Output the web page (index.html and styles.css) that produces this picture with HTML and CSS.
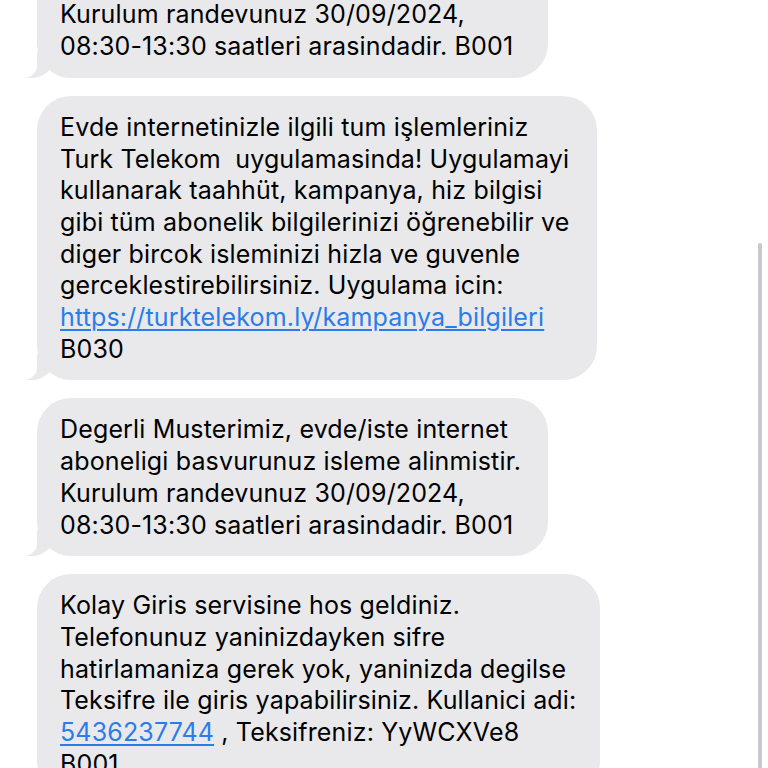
FILE: index.html
```html
<!DOCTYPE html>
<html lang="tr">
<head>
<meta charset="utf-8">
<title>Mesajlar</title>
<link rel="stylesheet" href="styles.css">
</head>
<body>
<main class="thread">
  <div class="bubble bubble-narrow">
    Degerli Musterimiz, evde/iste internet<br>
    aboneligi basvurunuz isleme alinmistir.<br>
    Kurulum randevunuz 30/09/2024,<br>
    08:30-13:30 saatleri arasindadir. B001
  </div>
  <div class="bubble bubble-wide">
    Evde internetinizle ilgili tum işlemleriniz<br>
    Turk Telekom&nbsp; uygulamasinda! Uygulamayi<br>
    kullanarak taahhüt, kampanya, hiz bilgisi<br>
    gibi tüm abonelik bilgilerinizi öğrenebilir ve<br>
    diger bircok isleminizi hizla ve guvenle<br>
    gerceklestirebilirsiniz. Uygulama icin:<br>
    <a class="link" href="#">https://turktelekom.ly/kampanya_bilgileri</a><br>
    B030
  </div>
  <div class="bubble bubble-narrow">
    Degerli Musterimiz, evde/iste internet<br>
    aboneligi basvurunuz isleme alinmistir.<br>
    Kurulum randevunuz 30/09/2024,<br>
    08:30-13:30 saatleri arasindadir. B001
  </div>
  <div class="bubble bubble-wider">
    Kolay Giris servisine hos geldiniz.<br>
    Telefonunuz yaninizdayken sifre<br>
    hatirlamaniza gerek yok, yaninizda degilse<br>
    Teksifre ile giris yapabilirsiniz. Kullanici adi:<br>
    <a class="link" href="#">5436237744</a> , Teksifreniz: YyWCXVe8<br>
    B001
  </div>
</main>
<div class="scrollbar"></div>
</body>
</html>
```

FILE: styles.css
```css
html, body {
  margin: 0;
  padding: 0;
  background: #ffffff;
  height: 768px;
  overflow: hidden;
}

body {
  font-family: Inter, "Noto Sans", "Liberation Sans", sans-serif;
  color: #000000;
}

.thread {
  display: flex;
  flex-direction: column;
  align-items: flex-start;
  gap: 18px;
  padding-left: 37px;
  margin-top: -80px;
}

.bubble {
  position: relative;
  box-sizing: border-box;
  background: #e9e9eb;
  border-radius: 34px;
  padding: 16px 20px 15px 23px;
  font-size: 25px;
  letter-spacing: 0.15px;
  line-height: 31.7px;
  white-space: nowrap;
}

.bubble::before {
  content: "";
  position: absolute;
  left: -14px;
  bottom: 0;
  width: 30px;
  height: 26px;
  background: #e9e9eb;
  border-bottom-right-radius: 22px 18px;
}

.bubble::after {
  content: "";
  position: absolute;
  left: -30px;
  bottom: 0;
  width: 30px;
  height: 26px;
  background: #ffffff;
  border-bottom-right-radius: 14px 12px;
}

.bubble-narrow { width: 511px; }
.bubble-wide { width: 560px; }
.bubble-wider { width: 563px; }

.link {
  color: #2a7de9;
  text-decoration: underline;
  text-decoration-thickness: 2px;
  text-underline-offset: 3px;
}

.scrollbar {
  position: absolute;
  top: 243px;
  right: 6px;
  width: 4px;
  height: 540px;
  border-radius: 2px;
  background: #c9c9cd;
}
```
